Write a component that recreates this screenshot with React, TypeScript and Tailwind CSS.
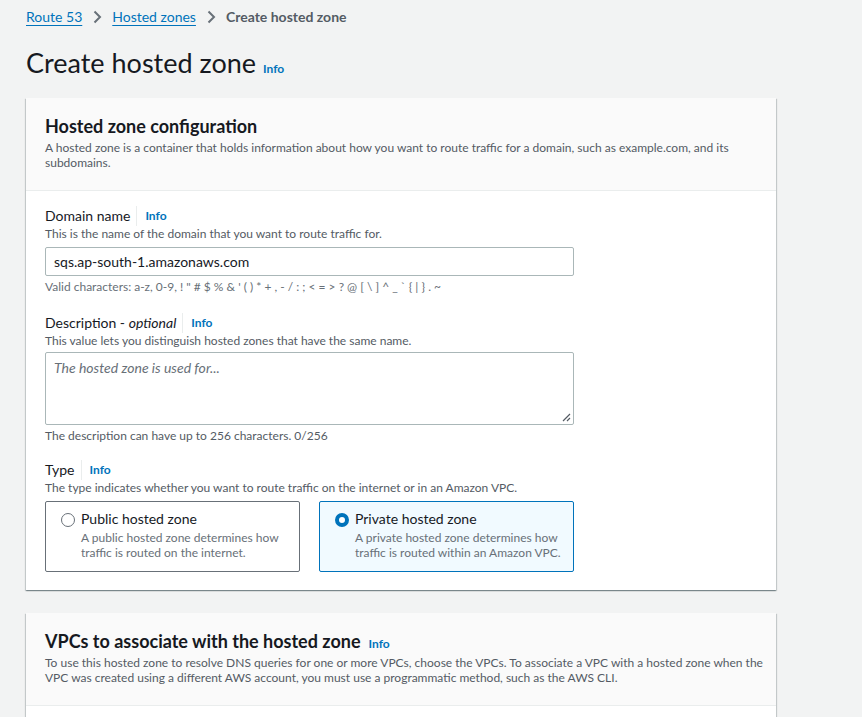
import React from "react";

const FONT = { fontFamily: 'Lato, "Liberation Sans", Arial, sans-serif' };

function Chevron() {
  return (
    <svg width="16" height="16" viewBox="0 0 16 16" className="mx-[7px] shrink-0">
      <path d="M5.5 2.5 11 8l-5.5 5.5" fill="none" stroke="#687078" strokeWidth="2" />
    </svg>
  );
}

function Info() {
  return <span className="text-[12px] font-bold text-[#0073bb]">Info</span>;
}

function Label({ children }: { children: React.ReactNode }) {
  return (
    <div className="flex items-center leading-[20px]">
      <span className="text-[14px] text-[#16191f]">{children}</span>
      <span className="ml-[6px] mr-[8px] h-[20px] border-l border-[#eaeded]" />
      <Info />
    </div>
  );
}

function Tile({ title, desc, checked }: { title: string; desc: React.ReactNode; checked?: boolean }) {
  return (
    <div
      className={`flex h-[71px] w-[255px] gap-[6px] rounded-[2px] border pl-[15px] pt-[7px] ${
        checked ? "border-[#0073bb] bg-[#f1faff]" : "border-[#687078] bg-white"
      }`}
    >
      <span
        className={`mt-[4px] h-[14px] w-[14px] shrink-0 rounded-full ${
          checked ? "border-[4px] border-[#0073bb] bg-white" : "border-[1.5px] border-[#687078] bg-white"
        }`}
      />
      <div>
        <div className="text-[14px] leading-[20px] text-[#16191f]">{title}</div>
        <div className="mt-[1px] text-[12px] leading-[15px] text-[#687078]">{desc}</div>
      </div>
    </div>
  );
}

function Lines({ lines }: { lines: string[] }) {
  return (
    <div className="mt-[2px] text-[12px] leading-[15px] text-[#545b64]">
      {lines.map((l) => (
        <p key={l} className="whitespace-nowrap">
          {l}
        </p>
      ))}
    </div>
  );
}

const cardShadow =
  "shadow-[0_1px_1px_0_rgba(0,28,36,0.3),1px_1px_1px_0_rgba(0,28,36,0.15),-1px_1px_1px_0_rgba(0,28,36,0.15)]";

export default function App() {
  return (
    <div className="h-[717px] w-[862px] overflow-hidden bg-[#f2f3f3] pl-[26px]" style={FONT}>
      {/* breadcrumb */}
      <nav className="flex h-[32px] items-center pt-[1px] text-[14px]">
        <span className="text-[#0073bb] underline underline-offset-[3px]">Route 53</span>
        <Chevron />
        <span className="text-[#0073bb] underline underline-offset-[3px]">Hosted zones</span>
        <Chevron />
        <span className="font-bold text-[#545b64]">Create hosted zone</span>
      </nav>

      <div className="mt-[12px] flex items-baseline gap-[7px]">
        <h1 className="text-[27px] leading-[38px] text-[#16191f]">Create hosted zone</h1>
        <Info />
      </div>

      {/* configuration card */}
      <section className={`mt-[16px] w-[750px] bg-white ${cardShadow}`}>
        <header className="border-b border-[#eaeded] bg-[#fafafa] px-[19px] pb-[20px] pt-[16px]">
          <h2 className="text-[18px] font-bold leading-[24px] text-[#16191f]">Hosted zone configuration</h2>
          <Lines
            lines={[
              "A hosted zone is a container that holds information about how you want to route traffic for a domain, such as example.com, and its",
              "subdomains.",
            ]}
          />
        </header>

        <div className="px-[19px] pb-[18px] pt-[15px]">
          <div className="w-[529px]">
            <Label>Domain name</Label>
            <p className="text-[12px] leading-[16px] text-[#545b64]">This is the name of the domain that you want to route traffic for.</p>
            <div className="mt-[5px] flex h-[29px] items-center rounded-[2px] border border-[#aab7b8] bg-white px-[8px] text-[14px] text-[#16191f]">
              sqs.ap-south-1.amazonaws.com
            </div>
            <p className="mt-[3px] text-[12px] leading-[16px] text-[#687078]">
              Valid characters: a-z, 0-9, ! " # $ % &amp; ' ( ) * + , - / : ; &lt; = &gt; ? @ [ \ ] ^ _ ` {"{"} | {"}"} . ~
            </p>

            <div className="mt-[18px]">
              <Label>
                Description - <i>optional</i>
              </Label>
            </div>
            <p className="text-[12px] leading-[16px] text-[#545b64]">This value lets you distinguish hosted zones that have the same name.</p>
            <div className="relative mt-[3px] h-[73px] rounded-[2px] border border-[#aab7b8] bg-white px-[8px] pt-[4px] text-[14px] italic text-[#687078]">
              The hosted zone is used for...
              <svg width="10" height="10" viewBox="0 0 10 10" className="absolute bottom-[2px] right-[2px]">
                <path d="M9 2 2 9M9 6 6 9" stroke="#545b64" strokeWidth="1.2" />
              </svg>
            </div>
            <p className="mt-[3px] text-[12px] leading-[16px] text-[#545b64]">The description can have up to 256 characters. 0/256</p>

            <div className="mt-[16px]">
              <Label>Type</Label>
            </div>
            <p className="text-[12px] leading-[16px] text-[#545b64]">
              The type indicates whether you want to route traffic on the internet or in an Amazon VPC.
            </p>
            <div className="mt-[5px] flex gap-[19px]">
              <Tile
                title="Public hosted zone"
                desc={
                  <>
                    A public hosted zone determines how
                    <br />
                    traffic is routed on the internet.
                  </>
                }
              />
              <Tile
                checked
                title="Private hosted zone"
                desc={
                  <>
                    A private hosted zone determines how
                    <br />
                    traffic is routed within an Amazon VPC.
                  </>
                }
              />
            </div>
          </div>
        </div>
      </section>

      {/* VPC card */}
      <section className={`mt-[23px] w-[750px] bg-white ${cardShadow}`}>
        <header className="border-b border-[#eaeded] bg-[#fafafa] px-[19px] pb-[20px] pt-[16px]">
          <div className="flex items-baseline gap-[8px]">
            <h2 className="text-[18px] font-bold leading-[24px] text-[#16191f]">VPCs to associate with the hosted zone</h2>
            <Info />
          </div>
          <Lines
            lines={[
              "To use this hosted zone to resolve DNS queries for one or more VPCs, choose the VPCs. To associate a VPC with a hosted zone when the",
              "VPC was created using a different AWS account, you must use a programmatic method, such as the AWS CLI.",
            ]}
          />
        </header>
        <div className="h-[60px]" />
      </section>
    </div>
  );
}
